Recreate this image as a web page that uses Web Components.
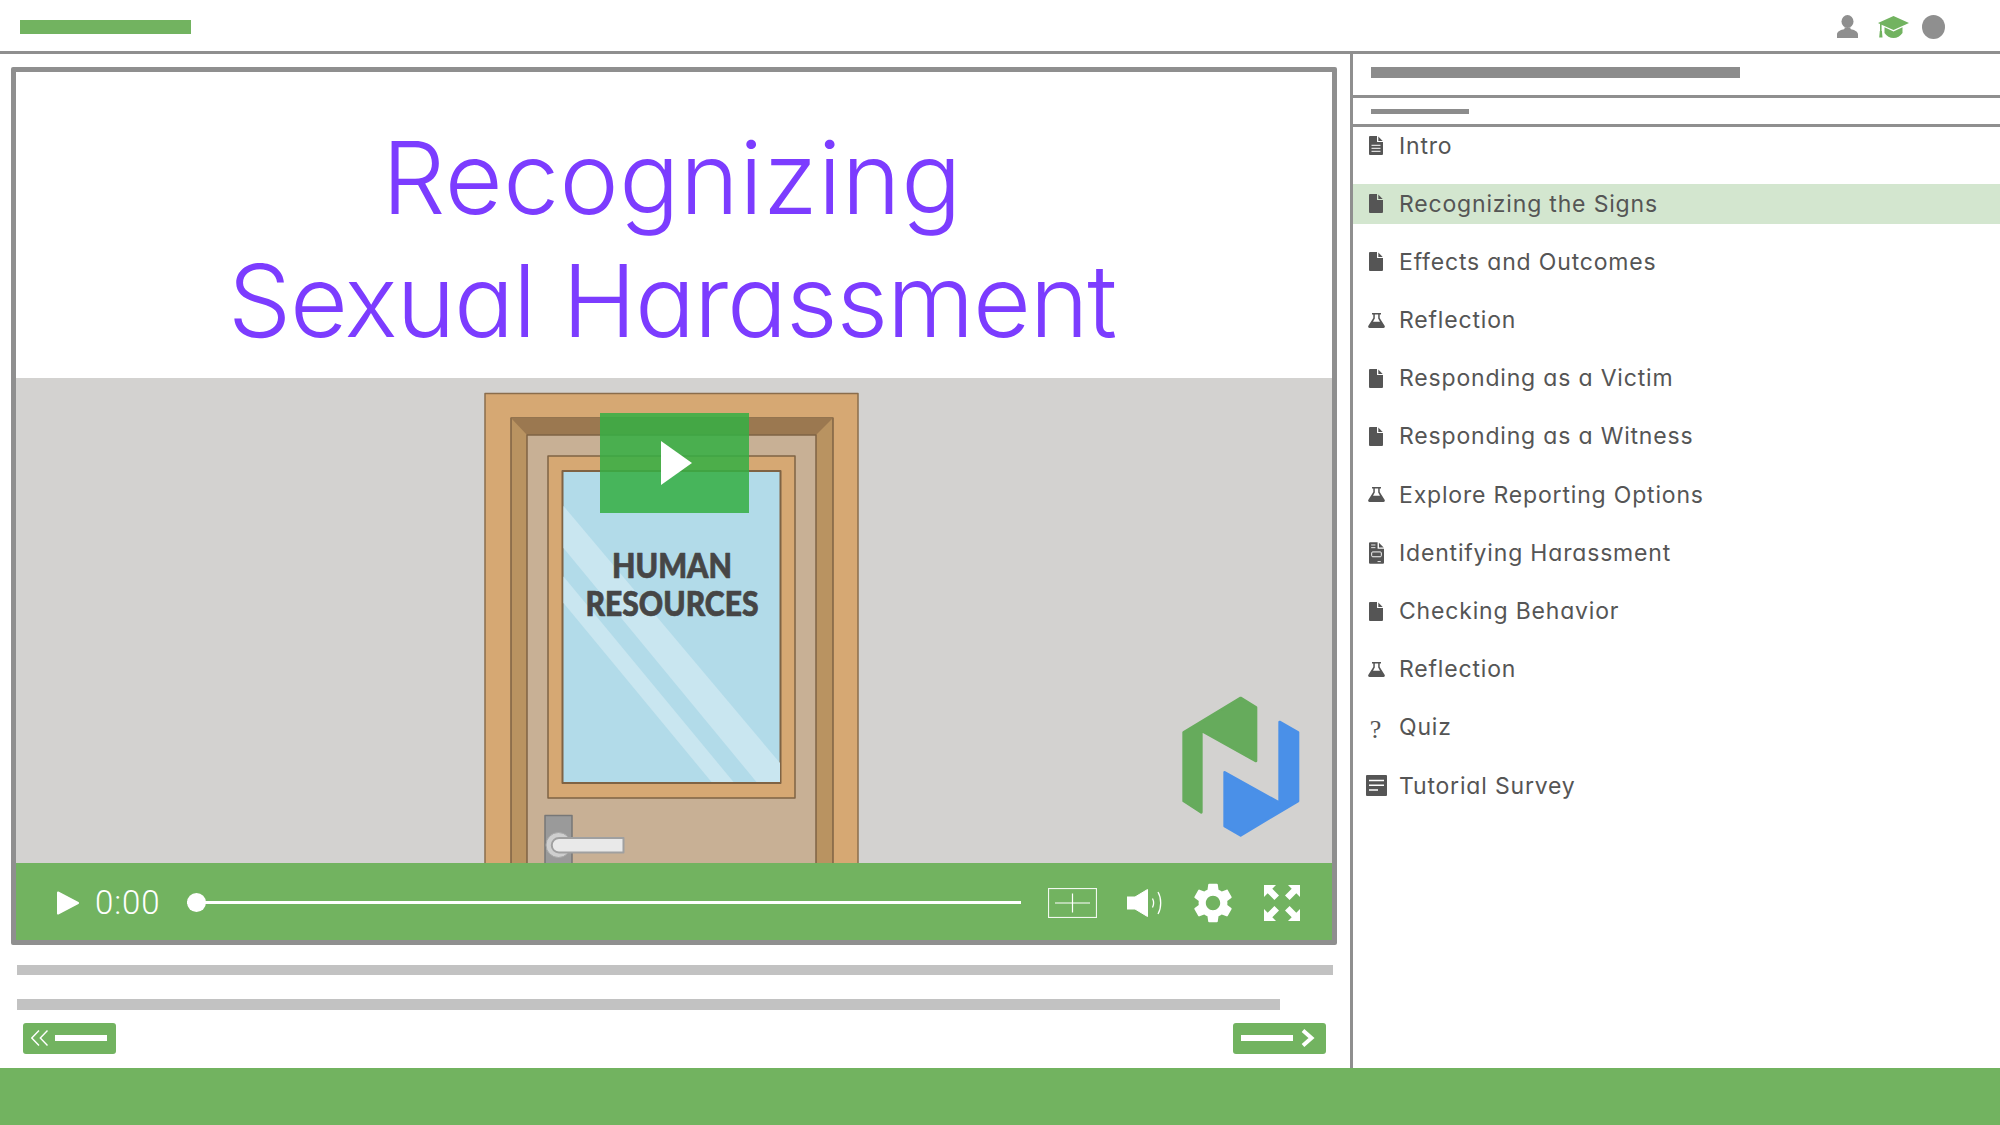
<!DOCTYPE html>
<html lang="en"><head><meta charset="utf-8"><title>Tutorial</title>
<style>
html,body{margin:0;padding:0;height:100%;background:#fff;}
body{font-family:"Inter","Liberation Sans",sans-serif;}
</style></head><body>
<lms-app>
  <lms-header slot="header"></lms-header>
  <lms-player slot="player">
    <span slot="title"><span style="letter-spacing:.5px">Recognizing</span><br><span style="letter-spacing:-1.2px">Sexual Harassment</span></span>
    <door-scene slot="scene"></door-scene>
    <player-controls slot="controls" time="0:00"></player-controls>
  </lms-player>
  <lms-pager slot="pager"></lms-pager>
  <lms-sidebar slot="sidebar">
    <lms-item icon="filetext">Intro</lms-item>
    <lms-item icon="file" active>Recognizing the Signs</lms-item>
    <lms-item icon="file">Effects and Outcomes</lms-item>
    <lms-item icon="flask">Reflection</lms-item>
    <lms-item icon="file">Responding as a Victim</lms-item>
    <lms-item icon="file">Responding as a Witness</lms-item>
    <lms-item icon="flask">Explore Reporting Options</lms-item>
    <lms-item icon="form">Identifying Harassment</lms-item>
    <lms-item icon="file">Checking Behavior</lms-item>
    <lms-item icon="flask">Reflection</lms-item>
    <lms-item icon="quiz">Quiz</lms-item>
    <lms-item icon="survey">Tutorial Survey</lms-item>
  </lms-sidebar>
</lms-app>
<script>
function def(name, html, setup){
  customElements.define(name, class extends HTMLElement{
    constructor(){super();this.attachShadow({mode:'open'}).innerHTML=html;}
    connectedCallback(){ if(setup) setup(this); }
  });
}
const GREEN='#72b360', LINE='#8f8f8f';

def('lms-app',`<style>
:host{display:flex;flex-direction:column;width:2000px;height:1125px;overflow:hidden;background:#fff}
.main{display:flex;height:1014px}
.left{width:1350px;flex:none;display:flex;flex-direction:column;box-sizing:border-box;padding:13px 0 0 11px}
.right{flex:1;min-width:0}
footer{height:57px;background:${GREEN}}
</style>
<slot name="header"></slot>
<div class="main"><div class="left"><slot name="player"></slot><slot name="pager"></slot></div>
<div class="right"><slot name="sidebar"></slot></div></div>
<footer></footer>`);

def('lms-header',`<style>
:host{display:flex;align-items:center;height:54px;box-sizing:border-box;border-bottom:3px solid ${LINE};padding:0 55px 0 20px;justify-content:space-between}
.bar{width:170.500px;height:14px;background:${GREEN};margin-top:3px}
.icons{display:flex;align-items:center;gap:20px;margin-top:2px}
.dot{width:23px;height:24px;border-radius:50%;background:#8f8f8f;margin-left:-7px}
svg{display:block}
</style>
<div class="bar"></div>
<div class="icons">
<svg width="21" height="23" viewBox="0 0 21 23"><ellipse cx="10.5" cy="6.5" rx="6" ry="6.5" fill="#8f8f8f"/><path d="M7.5 12.5h6v1.5c3.6 1 7.5 2.2 7.500 5.500v3.500H0v-3.500C0 16.200 3.900 15 7.500 14z" fill="#8f8f8f"/></svg>
<svg width="31" height="22" viewBox="0 0 31 22"><path d="M15.500 0 31 7 15.500 14 3.600 8.700V16H2V8L0 7z" fill="${GREEN}"/><path d="M6.500 11.300 15.500 15.400 24.500 11.300V17c-2 3-5.500 5-9 5s-7-2-9-5z" fill="${GREEN}"/><path d="M1.800 15h2.100l.6 6.500H1.200z" fill="${GREEN}"/></svg>
<div class="dot"></div>
</div>`);

def('lms-player',`<style>
:host{display:block;width:1326px;height:878px;box-sizing:border-box;border:5px solid ${LINE};border-radius:2px;background:#fff;flex:none}
.title{height:306px;box-sizing:border-box;padding:44px 4px 0 0;text-align:center;font:300 100px/123px "Inter","Liberation Sans",sans-serif;color:#7c3cff;font-feature-settings:"cv11" 1,"ss03" 1}
</style>
<div class="title"><slot name="title"></slot></div>
<slot name="scene"></slot>
<slot name="controls"></slot>`);

def('door-scene',`<style>
:host{display:block;position:relative;height:485px;background:#d3d2d0;overflow:hidden}
svg{display:block;width:100%;height:100%}
text{font-family:"Lato","Liberation Sans",sans-serif;font-weight:900;fill:#464646;stroke:#464646;stroke-width:.7px;font-size:34px;text-anchor:middle}
.play{position:absolute;left:584px;top:35px;width:149px;height:100px;background:rgba(54,175,68,.86);display:flex;align-items:center;justify-content:center}
.play svg{width:31px;height:44px;margin-left:4px}
</style>
<svg viewBox="16 378 1316 485" stroke-linejoin="round">
<rect x="485" y="393.500" width="373" height="480" fill="#d6a873" stroke="#8a6d4c" stroke-width="1.500"/>
<rect x="511" y="418" width="322" height="460" fill="#b99361" stroke="#7f6344" stroke-width="1.500"/>
<path d="M511 418H833L816 435H527z" fill="#9b7850"/>
<rect x="527" y="435" width="289" height="440" fill="#c8b095" stroke="#7f6344" stroke-width="1.500"/>
<rect x="548" y="456" width="247" height="342" fill="#d6a873" stroke="#7f6344" stroke-width="1.500"/>
<rect x="562.500" y="471" width="218" height="312" fill="#b2dbe9" stroke="#7f6344" stroke-width="2"/>
<path d="M563.500 506 780 763V782H756.500L563.500 548z" fill="#c9e6f0"/>
<path d="M563.500 576.500 733.500 782H711.500L563.500 603z" fill="#c9e6f0"/>
<text x="672" y="578" textLength="120" lengthAdjust="spacingAndGlyphs">HUMAN</text>
<text x="672" y="616" textLength="173" lengthAdjust="spacingAndGlyphs">RESOURCES</text>
<rect x="545" y="815.500" width="27" height="60" fill="#9a9a9a" stroke="#777" stroke-width="1.500"/>
<circle cx="558.500" cy="845" r="12.500" fill="#cfcfcf" stroke="#a8a8a8" stroke-width="1"/>
<path d="M559 838H623.500V852.500H559a7.250 7.250 0 0 1 0-14.500z" fill="#e9e9e9" stroke="#a0a0a0" stroke-width="2"/>
<g transform="translate(1140 680) scale(.3333)" stroke-width="8">
<path d="M302 54 348 82V243L184 152V397L131 363V157z" fill="#66ab5c" stroke="#66ab5c"/>
<path d="M419 126 474 157V363L302 466 254 438V277L419 369z" fill="#4a90e8" stroke="#4a90e8"/>
</g>
</svg>
<div class="play"><svg viewBox="0 0 31 44"><path d="M0 0 31 22 0 44z" fill="#fff"/></svg></div>`);

def('player-controls',`<style>
:host{display:flex;align-items:center;height:77px;background:${GREEN};padding:2px 0 0 41px;color:#fff;box-sizing:border-box}
svg{display:block;flex:none}
.time{font:300 33px/1 "Roboto","Liberation Sans",sans-serif;margin-left:16px;width:65px;letter-spacing:.9px;white-space:nowrap}
.track{flex:none;width:834.500px;margin-left:26.700px;height:3px;background:#fff;position:relative}
.track i{position:absolute;left:0;top:-8px;width:19px;height:19px;border-radius:50%;background:#fff}
.cc{margin-left:27px}
.sp{margin-left:30px}
.gear{margin-left:23.700px}
.fs{margin-left:27.300px}
</style>
<svg width="22" height="24" viewBox="0 0 22 24"><path d="M1 1.500 21 12 1 22.500z" fill="#fff" stroke="#fff" stroke-width="2" stroke-linejoin="round"/></svg>
<div class="time"></div>
<div class="track"><i></i></div>
<svg class="cc" width="49" height="30" viewBox="0 0 49 30" fill="none" stroke="#fff"><rect x=".5" y=".5" width="48" height="29" stroke-width="1.200" opacity=".9"/><path d="M7 15H42M24.500 5.500V24.500" stroke-width="1.200"/></svg>
<svg class="sp" width="38" height="28" viewBox="0 0 38 28"><path d="M0 8H8L20.500.5V27.500L8 20H0z" fill="#fff" stroke="#fff" stroke-width="1" stroke-linejoin="round"/><path d="M25.500 9.500c1.500 3 1.500 6 0 9M31 3c3.600 6 3.600 16 0 22" fill="none" stroke="#fff" stroke-width="1.300"/></svg>
<svg class="gear" width="48" height="48" viewBox="0 0 24 24"><path fill="#fff" d="M19.140 12.940c.04-.3.06-.61.06-.94 0-.32-.02-.64-.07-.94l2.030-1.580c.18-.14.23-.41.12-.61l-1.920-3.320c-.12-.22-.37-.29-.59-.22l-2.390.96c-.5-.38-1.030-.7-1.620-.94l-.36-2.540c-.04-.24-.24-.41-.48-.41h-3.840c-.24 0-.43.17-.47.41l-.36 2.540c-.59.24-1.130.57-1.620.94l-2.390-.96c-.22-.08-.47 0-.59.22L2.740 8.870c-.12.21-.08.47.12.61l2.030 1.580c-.05.3-.09.63-.09.94s.02.64.07.94l-2.030 1.580c-.18.14-.23.41-.12.61l1.920 3.320c.12.22.37.29.59.22l2.390-.96c.5.38 1.030.7 1.620.94l.36 2.540c.05.24.24.41.48.41h3.840c.24 0 .44-.17.47-.41l.36-2.540c.59-.24 1.130-.56 1.620-.94l2.390.96c.22.08.47 0 .59-.22l1.920-3.320c.12-.22.07-.47-.12-.61l-2.010-1.580zM12 15.600c-1.980 0-3.600-1.620-3.600-3.600s1.620-3.600 3.600-3.600 3.600 1.620 3.600 3.600-1.620 3.600-3.600 3.600z"/></svg>
<svg class="fs" width="36" height="36" viewBox="0 0 36 36" fill="#fff"><path id="p" d="M0 0H12L8.300 3.700 15 10.400 10.400 15 3.700 8.300 0 12z"/><use href="#p" transform="rotate(90 18 18)"/><use href="#p" transform="rotate(180 18 18)"/><use href="#p" transform="rotate(270 18 18)"/></svg>`,
el=>{el.shadowRoot.querySelector('.time').textContent=el.getAttribute('time')});

def('lms-pager',`<style>
:host{display:block;padding:19.500px 0 0 6px}
.b{height:10.500px;background:#c2c2c2;width:1316px}
.b+.b{width:1262.500px;margin-top:24px}
nav{display:flex;justify-content:space-between;margin:13.500px 0 0 6px;width:1302.500px}
a{display:flex;align-items:center;width:93px;height:30.500px;background:${GREEN};border-radius:3px;box-sizing:border-box;padding:0 8px}
i{display:block;width:52px;height:6px;background:#fff}
svg{display:block;flex:none}
.prev{gap:6px}
.next{gap:8px}
</style>
<div class="b"></div><div class="b"></div>
<nav>
<a class="prev"><svg width="18" height="16" viewBox="0 0 18 16" fill="none" stroke="#fff" stroke-width="1.400"><path d="M8 .5.800 8 8 15.500M16.500.5 9.300 8 16.500 15.500"/></svg><i></i></a>
<a class="next"><i></i><svg width="15" height="18" viewBox="0 0 15 18" fill="none" stroke="#fff" stroke-width="4"><path d="M2 1.500 10.500 9 2 16.500"/></svg></a>
</nav>`);

def('lms-sidebar',`<style>
:host{display:block;height:1014px;border-left:3px solid ${LINE};box-sizing:border-box}
.a{height:43.500px;box-sizing:border-box;border-bottom:3px solid ${LINE};padding:13px 0 0 18px}
.a i{display:block;width:369px;height:11px;background:#8c8c8c}
.b{height:29px;box-sizing:border-box;border-bottom:3px solid ${LINE};padding:11px 0 0 18px}
.b i{display:block;width:98px;height:5.500px;background:#8c8c8c}
.list{display:flex;flex-direction:column;gap:18.200px;margin-top:-.5px}
</style>
<div class="a"><i></i></div><div class="b"><i></i></div>
<div class="list"><slot></slot></div>`);

const C='#555';
const foldBody='M1 0H8V5.500a.6.6 0 0 0 .6.6H14V18a1 1 0 0 1-1 1H1a1 1 0 0 1-1-1V1a1 1 0 0 1 1-1z';
const fold=`<path d="M9.300.4 13.700 4.900H9.300z" fill="${C}"/>`;
const ICONS={
 file:`<svg width="14" height="19" viewBox="0 0 14 19"><path d="${foldBody}" fill="${C}"/>${fold}</svg>`,
 filetext:`<svg width="14" height="19" viewBox="0 0 14 19"><path d="${foldBody}" fill="${C}"/>${fold}<path d="M2.500 9.300H11.500M2.500 12.300H11.500M2.500 15.300H11.500" stroke="#fff" stroke-width="1"/></svg>`,
 form:`<svg width="15" height="22" viewBox="0 0 14 20"><path d="M1 0H8V5.500a.6.6 0 0 0 .6.6H14V19a1 1 0 0 1-1 1H1a1 1 0 0 1-1-1V1a1 1 0 0 1 1-1z" fill="${C}"/>${fold}<path d="M2 2.500H6M2 5H6M8 18H11" stroke="#fff" stroke-width=".8"/><rect x="2.500" y="9" width="9" height="4.500" rx="1" fill="none" stroke="#fff" stroke-width=".9"/></svg>`,
 flask:`<svg width="17" height="15" viewBox="0 0 17 15"><path fill-rule="evenodd" d="M4 0H13V1.500H11.700V5L16.600 12.800a1.400 1.400 0 0 1-1.100 2.200H1.500a1.400 1.400 0 0 1-1.100-2.200L5.300 5V1.500H4zM6.800 1.500V5.500L5 8.700H12L10.200 5.500V1.500z" fill="${C}"/></svg>`,
 quiz:`<span style="font:400 26px/1 'Liberation Serif',serif;color:${C};display:block;margin-top:5px">?</span>`,
 survey:`<svg width="21" height="21" viewBox="0 0 21 21"><rect width="21" height="21" rx="1" fill="${C}"/><path d="M3 5.500H18M3 10.300H18M3 15H12" stroke="#fff" stroke-width="1.500"/></svg>`
};
def('lms-item',`<style>
:host{display:flex;align-items:center;height:40px;box-sizing:border-box;padding:0 0 1px 12px;gap:12px;font:400 23px/38px "Inter","Liberation Sans",sans-serif;font-feature-settings:"cv11" 1;color:${C};letter-spacing:.82px}
:host([active]){background:#d3e6cf}
.ic{width:22px;height:22px;display:flex;align-items:center;justify-content:center;flex:none}
svg{display:block}
</style><span class="ic"></span><slot></slot>`,
el=>{el.shadowRoot.querySelector('.ic').innerHTML=ICONS[el.getAttribute('icon')]});
</script>
</body></html>
